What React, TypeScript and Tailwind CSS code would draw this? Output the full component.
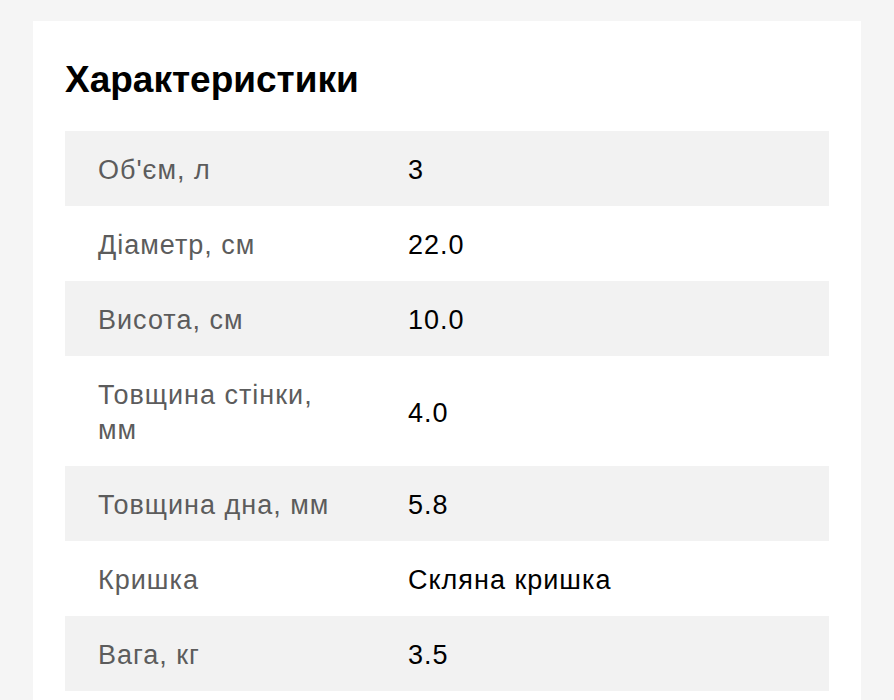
const specs = [
  { label: "Об'єм, л", value: "3" },
  { label: "Діаметр, см", value: "22.0" },
  { label: "Висота, см", value: "10.0" },
  { label: "Товщина стінки, мм", value: "4.0" },
  { label: "Товщина дна, мм", value: "5.8" },
  { label: "Кришка", value: "Скляна кришка" },
  { label: "Вага, кг", value: "3.5" },
];

export default function App() {
  return (
    <div className="min-h-[700px] bg-[#f5f5f5] px-[33px] pt-[21px] font-['Liberation_Sans',Arial,sans-serif]">
      <div className="bg-white px-[32px] pt-[36px] pb-[32px]">
        <h2 className="text-[37px] leading-[46px] font-bold text-black mb-[28px]">
          Характеристики
        </h2>
        <div className="flex flex-col">
          {specs.map((s, i) => (
            <div
              key={s.label}
              className={`grid grid-cols-[310px_1fr] pt-[22px] pb-[18px] text-[27px] leading-[35px] tracking-[1px] ${i % 2 === 0 ? "bg-[#f2f2f2]" : "bg-white"}`}
            >
              <div className="pl-[33px] pr-[30px] text-[#5c5c5c]">{s.label}</div>
              <div className="pl-[33px] text-black flex items-center">{s.value}</div>
            </div>
          ))}
        </div>
      </div>
    </div>
  );
}
